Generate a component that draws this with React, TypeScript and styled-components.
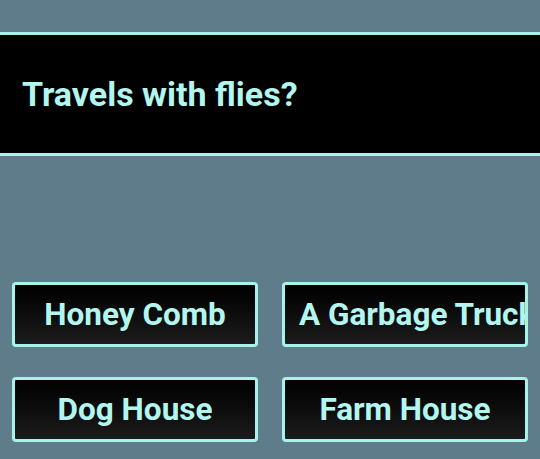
import React from "react";
import styled, { createGlobalStyle } from "styled-components";

const Global = createGlobalStyle`
  html, body { margin: 0; padding: 0; background: #5f7c8b; }
  body { font-family: Roboto, "Noto Sans", sans-serif; }
`;

const Page = styled.div`
  padding-top: 32px;
`;

const QuestionBar = styled.div`
  background: #000;
  border-top: 3px solid #a8f2ec;
  border-bottom: 3px solid #a8f2ec;
  height: 118px;
  display: flex;
  align-items: center;
  padding-left: 22px;
`;

const Question = styled.h1`
  margin: 0;
  color: #b3f6ef;
  font-weight: 700;
  font-size: 34px;
`;

const Answers = styled.div`
  display: grid;
  grid-template-columns: 1fr 1fr;
  column-gap: 24px;
  row-gap: 30px;
  padding: 126px 12px 0;
`;

const Answer = styled.button`
  height: 65px;
  box-sizing: border-box;
  border: 3px solid #a8f2ec;
  border-radius: 4px;
  background: linear-gradient(to bottom, #000 0%, #0d0d0d 50%, #1c1c1c 100%);
  color: #b3f6ef;
  font-family: Roboto, sans-serif;
  font-weight: 700;
  font-size: 31.5px;
  padding: 0 14px;
  white-space: nowrap;
  overflow: hidden;
  text-align: center;
  display: block;
  cursor: pointer;
`;

const answers = ["Honey Comb", "A Garbage Truck", "Dog House", "Farm House"];

export default function App() {
  return (
    <Page>
      <Global />
      <QuestionBar>
        <Question>Travels with flies?</Question>
      </QuestionBar>
      <Answers>
        {answers.map((a) => (
          <Answer key={a}>{a}</Answer>
        ))}
      </Answers>
    </Page>
  );
}
